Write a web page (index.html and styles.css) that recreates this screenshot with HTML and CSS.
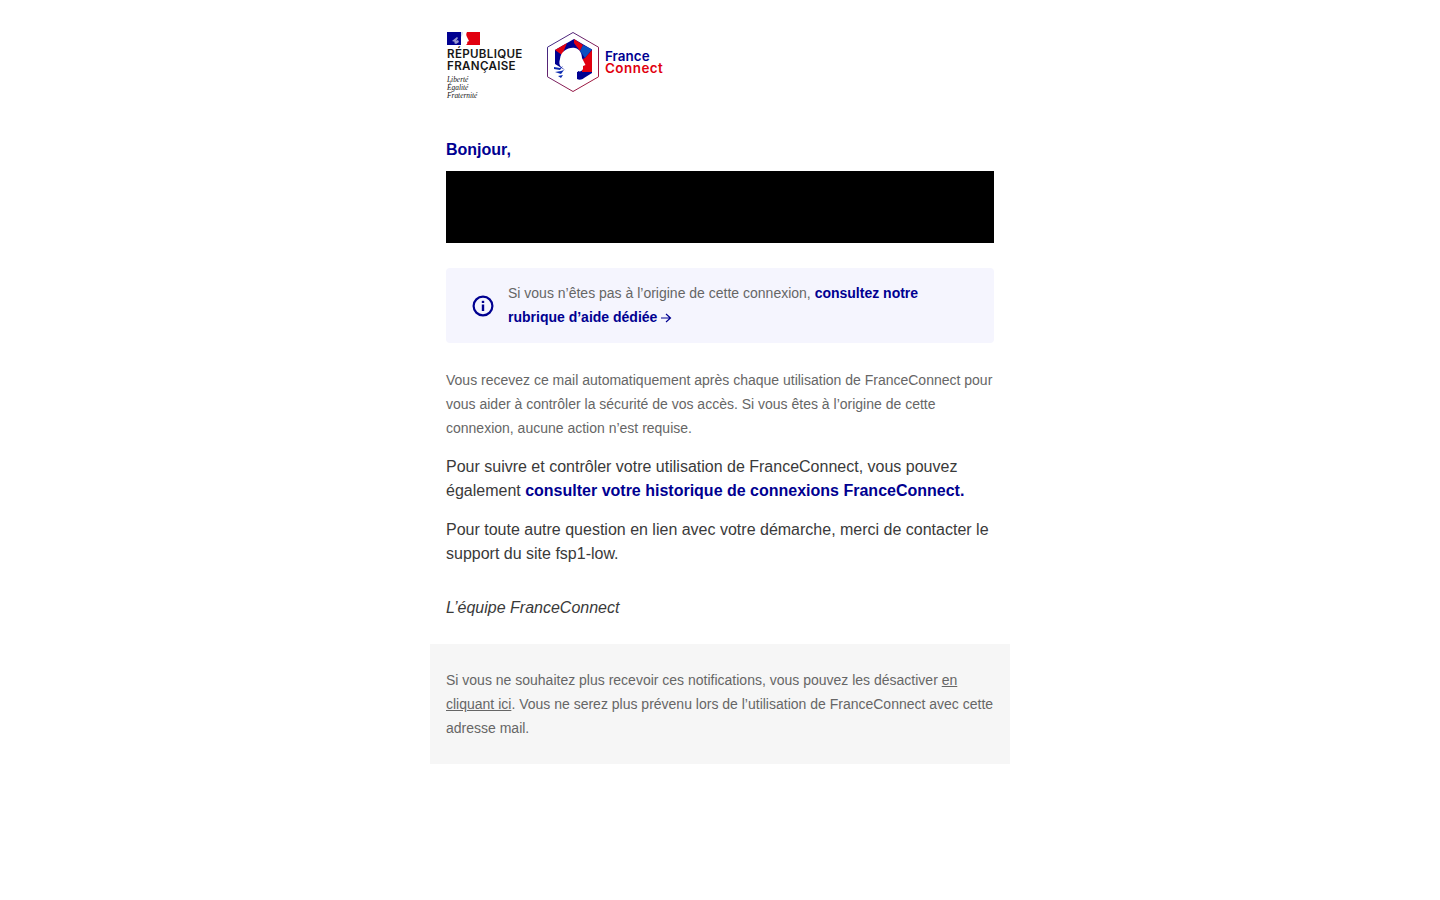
FILE: index.html
```html
<!DOCTYPE html>
<html lang="fr">
<head>
<meta charset="utf-8">
<title>FranceConnect</title>
<link rel="stylesheet" href="styles.css">
</head>
<body>
<main class="mail">
  <div class="content">
    <header class="logos">
      <div class="rf">
        <svg class="rf-flag" width="33" height="13" viewBox="0 0 33 13">
          <rect width="33" height="13" fill="#fff"/>
          <rect width="14" height="13" fill="#000091"/>
          <path d="M20 0h13v13H19c1-1 2-2 1-3l2-1-1-2-1-2c-1-2-1-3 0-5z" fill="#e1000f"/>
          <path d="M14 0h2c0 2-1 4-2 5z" fill="#d9d9ee"/>
          <path d="M5 9l5-4 1 1-2 3 2-1 1 2-3 2-2-1 1-1z" fill="#9a9ad0"/>
          <path d="M14 5l3 2-1 3 1 3h-3z" fill="#fff"/>
        </svg>
        <div class="rf-name">RÉPUBLIQUE<br>FRANÇAISE</div>
        <div class="rf-motto">Liberté<br>Égalité<br>Fraternité</div>
      </div>
      <div class="fc">
        <svg class="fc-mark" width="54" height="62" viewBox="0 0 54 62">
          <defs>
            <linearGradient id="hexstroke" x1="1" y1="1" x2="0" y2="0">
              <stop offset="0" stop-color="#b0132f"/>
              <stop offset=".5" stop-color="#7a1f5e"/>
              <stop offset="1" stop-color="#2b2a92"/>
            </linearGradient>
          </defs>
          <path d="M27 1.500l25.500 14.700v29.600L27 60.500 1.500 45.800V16.200z" fill="#fff" stroke="url(#hexstroke)" stroke-width="1"/>
          <path d="M28 8l18 10.500V41H22L9 33V19z" fill="#000091"/>
          <path d="M9 19l12-7-5 12z" fill="#e1000f"/>
          <path d="M28 8l9 6-3 6-6-8z" fill="#e1000f"/>
          <path d="M37 14l9 4.500-7 8.500-5-7z" fill="#0a4fc0"/>
          <path d="M46 19v22H36l1-13 2-1z" fill="#e1000f"/>
          <path d="M14 28c1-8 8-12 15-11 5 1 7 6 7 10l3.500 7-2.500 1v3c-1 2-3 3-5 2l-2 8-7 1c-1-6-4-11-8-13-2-2-2-5-1-8z" fill="#fff"/>
          <path d="M31 41h15v1l-8 5c-2 2-5 2-7 1z" fill="#000091"/>
          <path d="M8 36l6 1 3-2-3 4-6-1zM9 41l6-1 3-1-3 4zM12 45l5-1-2 3z" fill="#0b2bb0"/>
        </svg>
        <div class="fc-name"><span class="fc-france">France</span><span class="fc-connect">Connect</span></div>
      </div>
    </header>

    <h1 class="hello">Bonjour,</h1>
    <div class="redacted"></div>

    <aside class="notice">
      <svg class="notice-icon" width="22" height="22" viewBox="0 0 22 22">
        <circle cx="11" cy="11" r="9.400" fill="none" stroke="#000091" stroke-width="2.200"/>
        <rect x="9.800" y="9.500" width="2.400" height="6.500" fill="#000091"/>
        <rect x="9.800" y="5.800" width="2.400" height="2.200" fill="#000091"/>
      </svg>
      <p class="notice-text">Si vous n’êtes pas à l’origine de cette connexion, <a class="strong-link" href="#">consultez notre rubrique d’aide dédiée<svg class="arrow" width="12" height="12" viewBox="0 0 12 12"><path d="M1 6h9.500M6 2l4.500 4L6 10" fill="none" stroke="#000091" stroke-width="1.200"/></svg></a></p>
    </aside>

    <p class="small">Vous recevez ce mail automatiquement après chaque utilisation de FranceConnect pour vous aider à contrôler la sécurité de vos accès. Si vous êtes à l’origine de cette connexion, aucune action n’est requise.</p>
    <p class="body">Pour suivre et contrôler votre utilisation de FranceConnect, vous pouvez également <a class="strong-link" href="#">consulter votre historique de connexions FranceConnect.</a></p>
    <p class="body">Pour toute autre question en lien avec votre démarche, merci de contacter le support du site fsp1-low.</p>
    <p class="sign">L’équipe FranceConnect</p>
  </div>
  <footer class="foot">
    <p class="foot-text">Si vous ne souhaitez plus recevoir ces notifications, vous pouvez les désactiver <a class="foot-link" href="#">en cliquant ici</a>. Vous ne serez plus prévenu lors de l’utilisation de FranceConnect avec cette adresse mail.</p>
  </footer>
</main>
</body>
</html>
```
FILE: styles.css
```css
* { box-sizing: border-box; }
html, body { margin: 0; padding: 0; background: #fff; }
body { font-family: "Liberation Sans", Arial, sans-serif; color: #3a3a3a; }
p, h1 { margin: 0; }
.mail { width: 580px; margin: 0 auto; }
.content { padding: 30px 16px 24px; }

.logos { display: flex; align-items: flex-start; gap: 23px; height: 71px; }
.rf { width: 77px; padding: 2px 0 0 1px; }
.rf-flag { display: block; }
.rf-name { margin-top: 3px; font: 600 11.6px/12px Inter, "Liberation Sans", sans-serif; letter-spacing: .32px; color: #161616; white-space: nowrap; }
.rf-motto { margin-top: 4px; font: italic 7.400px/8px "Liberation Serif", serif; color: #161616; }
.fc { display: flex; align-items: center; gap: 5px; padding-top: 1px; }
.fc-mark { display: block; }
.fc-name { display: flex; flex-direction: column; font: 600 13.400px/12px Inter, "Liberation Sans", sans-serif; }
.fc-france { color: #000091; letter-spacing: .05px; }
.fc-connect { color: #e1000f; letter-spacing: .5px; }

.hello { margin-top: 37px; font-size: 16px; line-height: 24px; font-weight: 700; color: #000091; }
.redacted { height: 72px; margin-top: 9px; background: #000; }

.notice { display: flex; align-items: center; gap: 14px; height: 75px; margin-top: 25px; padding: 0 48px 0 26px; background: #f5f5fe; border-radius: 4px; }
.notice-icon { flex: none; }
.notice-text { font-size: 14px; line-height: 24px; color: #666; margin-bottom: 1px; }
.strong-link { color: #000091; font-weight: 700; text-decoration: none; }
.arrow { margin-left: 3px; vertical-align: -2px; }

.small { margin-top: 25px; font-size: 14px; line-height: 24px; color: #666; }
.body { font-size: 16px; line-height: 24px; margin-top: 15px; }
.sign { margin-top: 30px; font-size: 16px; line-height: 24px; font-style: italic; }

.foot { height: 120px; padding: 24px 16px; background: #f6f6f6; }
.foot-text { font-size: 14px; line-height: 24px; color: #666; }
.foot-link { color: #666; text-decoration: underline; }
```
